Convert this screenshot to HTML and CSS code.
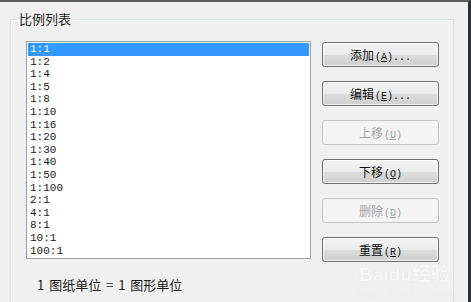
FILE: index.html
```html
<!DOCTYPE html>
<html lang="zh-CN">
<head>
    <meta charset="UTF-8">
    <title>比例列表</title>
    <link rel="stylesheet" href="styles.css">
</head>
<body>
    <div class="window">
        <fieldset class="group">
            <legend>比例列表</legend>
            <div class="row">
                <ul class="scale-list">
                    <li class="selected">1:1</li>
                    <li>1:2</li>
                    <li>1:4</li>
                    <li>1:5</li>
                    <li>1:8</li>
                    <li>1:10</li>
                    <li>1:16</li>
                    <li>1:20</li>
                    <li>1:30</li>
                    <li>1:40</li>
                    <li>1:50</li>
                    <li>1:100</li>
                    <li>2:1</li>
                    <li>4:1</li>
                    <li>8:1</li>
                    <li>10:1</li>
                    <li>100:1</li>
                </ul>
                <div class="buttons">
                    <button>添加<span class="key">(<u>A</u>)...</span></button>
                    <button>编辑<span class="key">(<u>E</u>)...</span></button>
                    <button disabled>上移<span class="key">(<u>U</u>)</span></button>
                    <button>下移<span class="key">(<u>O</u>)</span></button>
                    <button disabled>删除<span class="key">(<u>D</u>)</span></button>
                    <button>重置<span class="key">(<u>R</u>)</span></button>
                </div>
            </div>
            <p class="caption">1 图纸单位 = 1 图形单位</p>
        </fieldset>
        <div class="watermark">
            <span class="brand">Baidu经验</span>
            <span class="site">jingyan.baidu.com</span>
        </div>
    </div>
</body>
</html>
```

FILE: styles.css
```css
body {
    margin: 0;
    background-color: #f0f0f0;
    font-family: "Noto Sans CJK SC", sans-serif;
    color: #1a1a1a;
}
.window {
    position: relative;
    width: 471px;
    height: 302px;
    box-sizing: border-box;
    border-top: 2px solid #5e5e5e;
    border-right: 3px solid #2e2e3a;
    background-color: #f0f0f0;
    padding-left: 10px;
    overflow: hidden;
}
.group {
    width: 444px;
    height: 320px;
    box-sizing: border-box;
    margin: 9px 0 0 0;
    padding: 0 14px 0 15px;
    border: 1px solid #d5dfe5;
    box-shadow: inset 1px 1px 0 #fff;
}
.group legend {
    margin-left: -9px;
    padding: 0 2px;
    font-size: 13px;
    line-height: 16px;
    color: #222;
}
.row {
    display: flex;
    align-items: flex-start;
    gap: 11px;
    margin-top: 14px;
}
.scale-list {
    list-style: none;
    margin: 0;
    padding: 1px;
    width: 285px;
    height: 218px;
    box-sizing: border-box;
    border: 1px solid #9a9ea6;
    background-color: #fff;
    font-family: "Liberation Mono", monospace;
    font-size: 11px;
}
.scale-list li {
    height: 12.6px;
    line-height: 12.6px;
    padding-left: 2px;
    color: #1a1a1a;
}
.scale-list li.selected {
    background-color: #3399ff;
    color: #eaf6ff;
}
.buttons {
    display: flex;
    flex-direction: column;
    gap: 14px;
    margin-top: 1px;
}
button {
    width: 117px;
    height: 25px;
    padding: 0;
    border: 1px solid #707070;
    border-radius: 3px;
    background: linear-gradient(#f4f4f4, #ebebeb 50%, #dddddd 51%, #cfcfcf);
    box-shadow: inset 0 0 0 1px rgba(255,255,255,0.7);
    font-family: "Noto Sans CJK SC", sans-serif;
    font-size: 12px;
    color: #111;
}
button:disabled {
    border-color: #c4c7c9;
    background: #f4f4f4;
    box-shadow: none;
    color: #a3a3a3;
}
.key {
    font-family: "Liberation Mono", monospace;
    font-size: 10px;
    margin-left: 1px;
}
.caption {
    margin: 15px 0 0 11px;
    font-size: 13px;
    line-height: 16px;
    word-spacing: 2px;
    color: #1a1a1a;
}
.watermark {
    position: absolute;
    left: 356px;
    top: 262px;
    display: flex;
    flex-direction: column;
    align-items: center;
    color: #f6f6f6;
    text-shadow: 0 0 1px #dadada;
    font-family: "Liberation Sans", "Noto Sans CJK SC", sans-serif;
}
.watermark .brand {
    font-size: 19px;
    line-height: 22px;
    font-weight: bold;
}
.watermark .site {
    font-size: 12px;
    line-height: 14px;
}
```
